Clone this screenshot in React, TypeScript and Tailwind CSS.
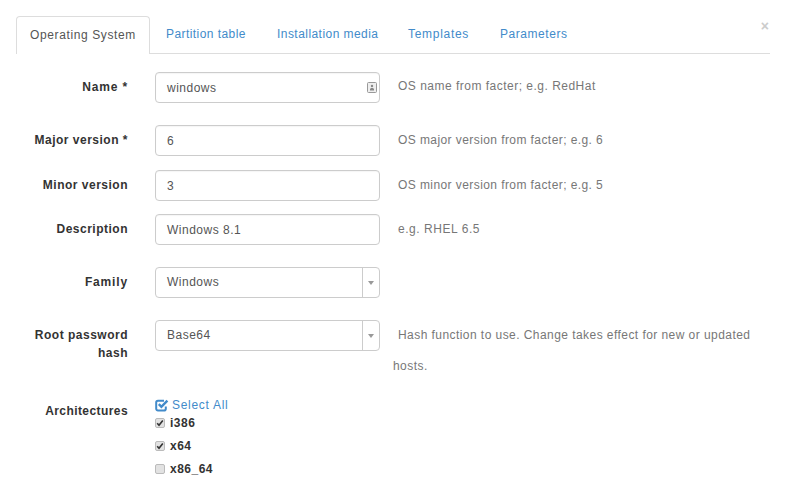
import React from "react";

const TABS = [
  { label: "Partition table", className: "w-[109px] tracking-[0.43px]" },
  { label: "Installation media", className: "w-[129px] tracking-[0.45px]" },
  { label: "Templates", className: "w-[90px] tracking-[0.7px]" },
  { label: "Parameters", className: "w-[95px] tracking-[0.55px]" },
];

function Row({
  label,
  height,
  children,
  help,
  labelClass = "pt-[6px]",
}: {
  label: React.ReactNode;
  height: string;
  children: React.ReactNode;
  help?: React.ReactNode;
  labelClass?: string;
}) {
  return (
    <div className={`flex items-start ${height}`}>
      <label className={`w-[112px] shrink-0 text-right text-[12px] leading-[18px] font-bold text-[#333] ${labelClass}`}>
        {label}
      </label>
      <div className="ml-[27px] w-[225px] shrink-0">{children}</div>
      {help}
    </div>
  );
}

function Help({ text, className = "pt-[6px] tracking-[0.42px]" }: { text: string; className?: string }) {
  return <span className={`ml-[18px] text-[12px] leading-[18px] text-[#777] ${className}`}>{text}</span>;
}

function TextInput({ value, icon }: { value: string; icon?: boolean }) {
  return (
    <div className="flex h-[31px] items-center justify-between rounded-[4px] border border-[#ccc] bg-white pr-[2px] pl-[11px] text-[12px] text-[#555] shadow-[inset_0_1px_1px_rgba(0,0,0,0.04)]">
      <span>{value}</span>
      {icon && (
        <svg width="10" height="11" viewBox="0 0 10 11">
          <rect x="0.5" y="0.5" width="9" height="10" rx="1" fill="#eee" stroke="#999" />
          <circle cx="5" cy="4" r="1.2" fill="#888" />
          <path d="M3 8.5V7l1-1h2l1 1v1.5z" fill="#888" />
        </svg>
      )}
    </div>
  );
}

function SelectBox({ value }: { value: string }) {
  return (
    <div className="flex h-[31px] items-stretch rounded-[4px] border border-[#ccc] bg-white text-[12px] text-[#555]">
      <span className="flex-1 pt-[5px] pl-[11px] leading-[18px]">{value}</span>
      <span className="flex w-[17px] items-center justify-center border-l border-[#ccc] pr-[1px]">
        <span className="h-0 w-0 border-t-[4px] border-r-[3px] border-l-[3px] border-t-[#999] border-r-transparent border-l-transparent" />
      </span>
    </div>
  );
}

function Check({ label, checked, className }: { label: string; checked?: boolean; className: string }) {
  return (
    <div className={`flex h-[18px] items-center text-[12px] font-bold text-[#333] ${className}`}>
      <span className="mr-[5px] flex h-[10px] w-[10px] items-center justify-center rounded-[2px] border border-[#bbb] bg-[#e2e2e2]">
        {checked && (
          <svg width="8" height="8" viewBox="0 0 8 8">
            <path d="M1.2 4.2 3 6.2 6.8 1.4" fill="none" stroke="#333" strokeWidth="1.6" />
          </svg>
        )}
      </span>
      {label}
    </div>
  );
}

export default function App() {
  return (
    <div
      className="relative h-[502px] w-[785px] overflow-hidden bg-white pt-[16px] pr-[15px] pl-[16px] tracking-[0.5px]"
      style={{ fontFamily: '"Liberation Sans", Arial, sans-serif' }}
    >
      <span className="absolute top-[17px] right-[16px] text-[14px] leading-[18px] font-bold tracking-normal text-[#ccc]">
        ×
      </span>

      <div className="flex h-[38px] border-b border-[#ddd] text-[12px]">
        <div className="h-[38px] w-[134px] rounded-t-[4px] border border-b-0 border-[#ddd] bg-white pt-[9px] pl-[13px] leading-[18px] tracking-[0.62px] text-[#555]">
          Operating System
        </div>
        {TABS.map((t) => (
          <div key={t.label} className={`ml-[2px] pt-[9px] pl-[14px] leading-[18px] text-[#428bca] ${t.className}`}>
            {t.label}
          </div>
        ))}
      </div>

      <div className="mt-[18px]">
        <Row
          label="Name *"
          height="h-[53px]"
          labelClass="pt-[6px] tracking-[0.85px]"
          help={<Help text="OS name from facter; e.g. RedHat" className="pt-[5px] tracking-[0.49px]" />}
        >
          <TextInput value="windows" icon />
        </Row>
        <Row label="Major version *" height="h-[45px]" help={<Help text="OS major version from facter; e.g. 6" />}>
          <TextInput value="6" />
        </Row>
        <Row label="Minor version" height="h-[44px]" help={<Help text="OS minor version from facter; e.g. 5" />}>
          <TextInput value="3" />
        </Row>
        <Row
          label="Description"
          height="h-[53px]"
          help={<Help text="e.g. RHEL 6.5" className="pt-[6px] tracking-[0.55px]" />}
        >
          <TextInput value="Windows 8.1" />
        </Row>
        <Row label="Family" height="h-[53px]" labelClass="pt-[6px] tracking-[0.85px]">
          <SelectBox value="Windows" />
        </Row>
        <Row
          label={
            <>
              Root password
              <br />
              hash
            </>
          }
          height="h-[75px]"
          help={
            <span className="ml-[13px] w-[370px] text-[12px] leading-[31px] tracking-[0.44px] text-[#777]">
              <span className="ml-[5px]">Hash function to use. Change takes effect for new or updated</span> hosts.
            </span>
          }
        >
          <SelectBox value="Base64" />
        </Row>
        <Row label="Architectures" height="h-[90px]" labelClass="pt-[7px] tracking-[0.42px]">
          <div>
            <div className="mt-[1px] flex h-[18px] items-center text-[12px] tracking-[0.7px] text-[#428bca]">
              <svg width="14" height="13" viewBox="0 0 14 13" className="mr-[3px]">
                <path
                  d="M10.8 7.5v2.2A1.8 1.8 0 0 1 9 11.5H3a1.8 1.8 0 0 1-1.8-1.8V3.5A1.8 1.8 0 0 1 3 1.7h6"
                  fill="none"
                  stroke="#428bca"
                  strokeWidth="2"
                />
                <path d="M3.8 5.2 6.4 7.8 12.4 1.6" fill="none" stroke="#428bca" strokeWidth="2.4" />
              </svg>
              Select All
            </div>
            <Check label="i386" checked className="" />
            <Check label="x64" checked className="mt-[5px]" />
            <Check label="x86_64" className="mt-[5px]" />
          </div>
        </Row>
      </div>
    </div>
  );
}
